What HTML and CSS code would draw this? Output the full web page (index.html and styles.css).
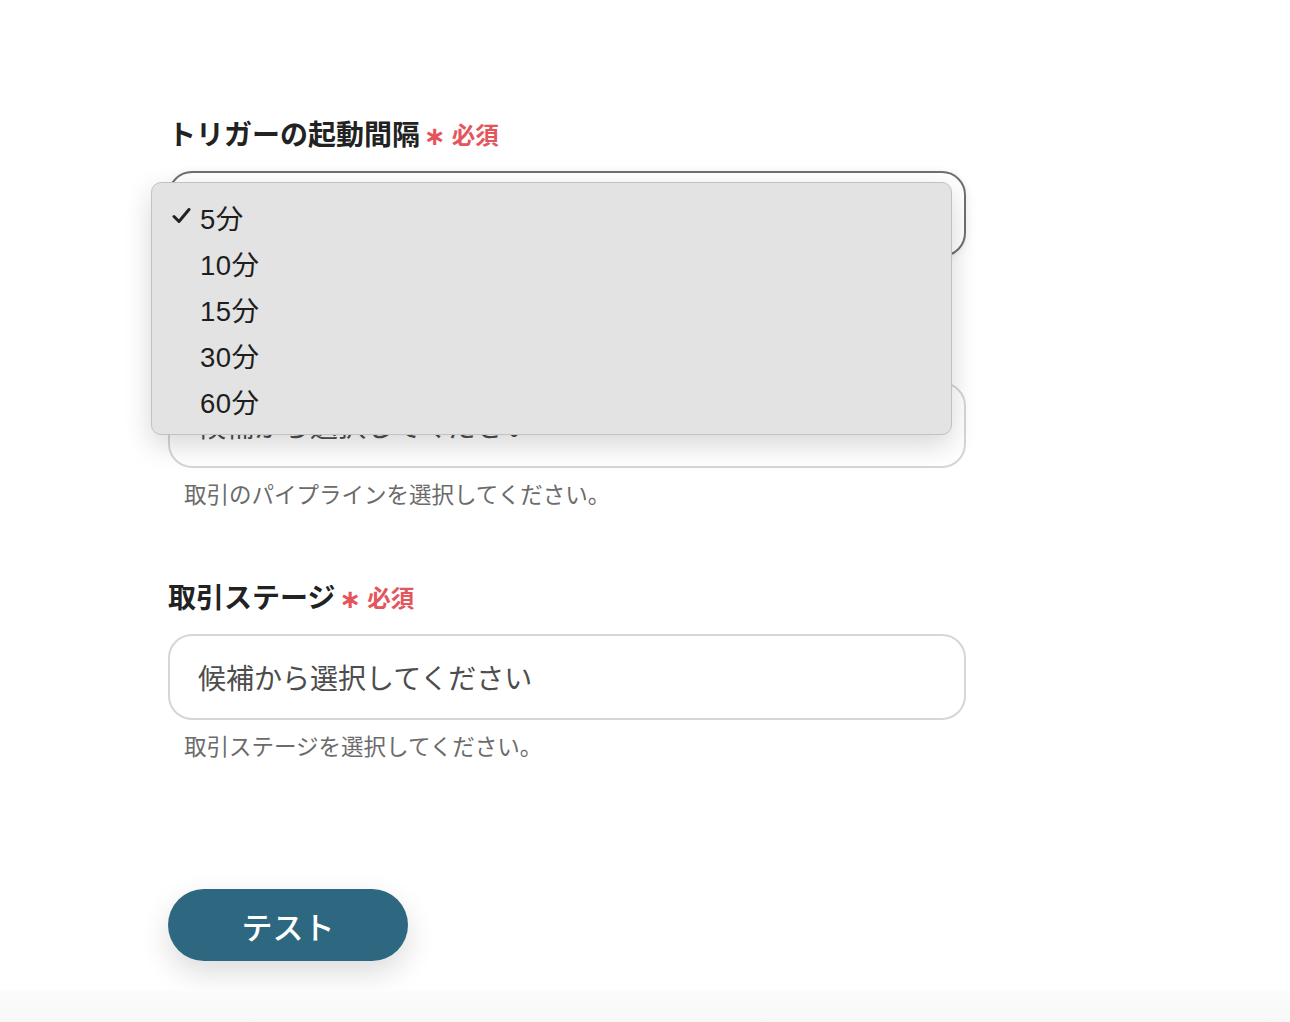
FILE: index.html
```html
<!DOCTYPE html>
<html lang="ja">
<head>
<meta charset="utf-8">
<title>トリガー設定</title>
<link rel="stylesheet" href="styles.css">
</head>
<body>
<main class="page">
  <div class="field field-first">
    <div class="label-row">
      <span class="label">トリガーの起動間隔</span>
      <span class="req"><span class="ast">∗</span>必須</span>
    </div>
    <div class="select-wrap">
      <div class="input input-focus"><span class="value">5分</span></div>
      <ul class="menu">
        <li class="item">
          <svg class="check" width="19" height="17" viewBox="0 0 19 17"><path d="M2 9.5 L7 14.5 L17 2.5" fill="none" stroke="#222" stroke-width="3" stroke-linecap="round" stroke-linejoin="round"/></svg>
          <span>5分</span>
        </li>
        <li class="item"><span>10分</span></li>
        <li class="item"><span>15分</span></li>
        <li class="item"><span>30分</span></li>
        <li class="item"><span>60分</span></li>
      </ul>
    </div>
  </div>

  <div class="field">
    <div class="label-row">
      <span class="label">取引のパイプライン</span>
      <span class="req"><span class="ast">∗</span>必須</span>
    </div>
    <div class="input"><span class="placeholder">候補から選択してください</span></div>
    <p class="help">取引のパイプラインを選択してください。</p>
  </div>

  <div class="field">
    <div class="label-row">
      <span class="label">取引ステージ</span>
      <span class="req"><span class="ast">∗</span>必須</span>
    </div>
    <div class="input"><span class="placeholder">候補から選択してください</span></div>
    <p class="help">取引ステージを選択してください。</p>
  </div>

  <button class="btn" type="button">テスト</button>
</main>
<footer class="foot"></footer>
</body>
</html>
```

FILE: styles.css
```css
* { box-sizing: border-box; }
html, body { margin: 0; padding: 0; }
body {
  background: #ffffff;
  font-family: "Noto Sans CJK JP", "Noto Sans", sans-serif;
  color: #222;
  min-height: 100vh;
  display: flex;
  flex-direction: column;
}
.page {
  flex: 1;
  padding: 115px 0 28px 168px;
  display: flex;
  flex-direction: column;
  align-items: flex-start;
}
.field {
  width: 798px;
  margin-bottom: 71px;
}
.field-first { margin-bottom: 69px; }
.label-row {
  display: flex;
  align-items: center;
  height: 36px;
  gap: 4px;
  margin-bottom: 20px;
}
.label {
  font-size: 28px;
  font-weight: 700;
  color: #222;
  line-height: 36px;
  letter-spacing: 0;
}
.req {
  display: flex;
  align-items: center;
  color: #e5555c;
  font-size: 23.5px;
  font-weight: 700;
  line-height: 36px;
  padding-top: 2px;
}
.ast {
  font-family: "DejaVu Sans", sans-serif;
  font-size: 26px;
  margin-right: 6px;
  position: relative;
  top: 2px;
}
.select-wrap { position: relative; }
.input {
  height: 86px;
  border: 2px solid #d3d6da;
  border-radius: 24px;
  background: #fff;
  display: flex;
  align-items: center;
  padding-left: 28px;
  font-size: 28px;
}
.input-focus {
  border-color: #6f6f6f;
  box-shadow: 0 2px 10px rgba(0,0,0,0.08);
}
.placeholder { color: #4d4d4d; }
.value { color: #222; }
.help {
  margin: 11px 0 0 16px;
  font-size: 22.5px;
  line-height: 28px;
  color: #6b6b6b;
}
.menu {
  position: absolute;
  top: 11px;
  left: -17px;
  width: 801px;
  margin: 0;
  list-style: none;
  padding: 11px 0 10px 0;
  background: #e3e3e3;
  border: 1px solid #c2c2c2;
  border-radius: 10px;
  box-shadow: 0 10px 28px rgba(0,0,0,0.16);
  z-index: 10;
}
.item {
  height: 46px;
  display: flex;
  align-items: center;
  padding-left: 48px;
  position: relative;
  font-family: "Liberation Sans", "Noto Sans CJK JP", sans-serif;
  font-size: 27.5px;
  color: #1e1e1e;
}
.item span { letter-spacing: 0.5px; }
.check {
  position: absolute;
  left: 20px;
  top: 13px;
}
.btn {
  margin-top: 59px;
  width: 240px;
  height: 72px;
  border: none;
  border-radius: 36px;
  background: #2e6780;
  color: #fff;
  font-family: "Noto Sans CJK JP", sans-serif;
  font-size: 31px;
  font-weight: 500;
  letter-spacing: 0;
  box-shadow: 0 12px 30px rgba(0,0,0,0.14);
  cursor: pointer;
}
.foot {
  height: 32px;
  background: linear-gradient(#fcfcfc, #f8f8f8);
}
```
